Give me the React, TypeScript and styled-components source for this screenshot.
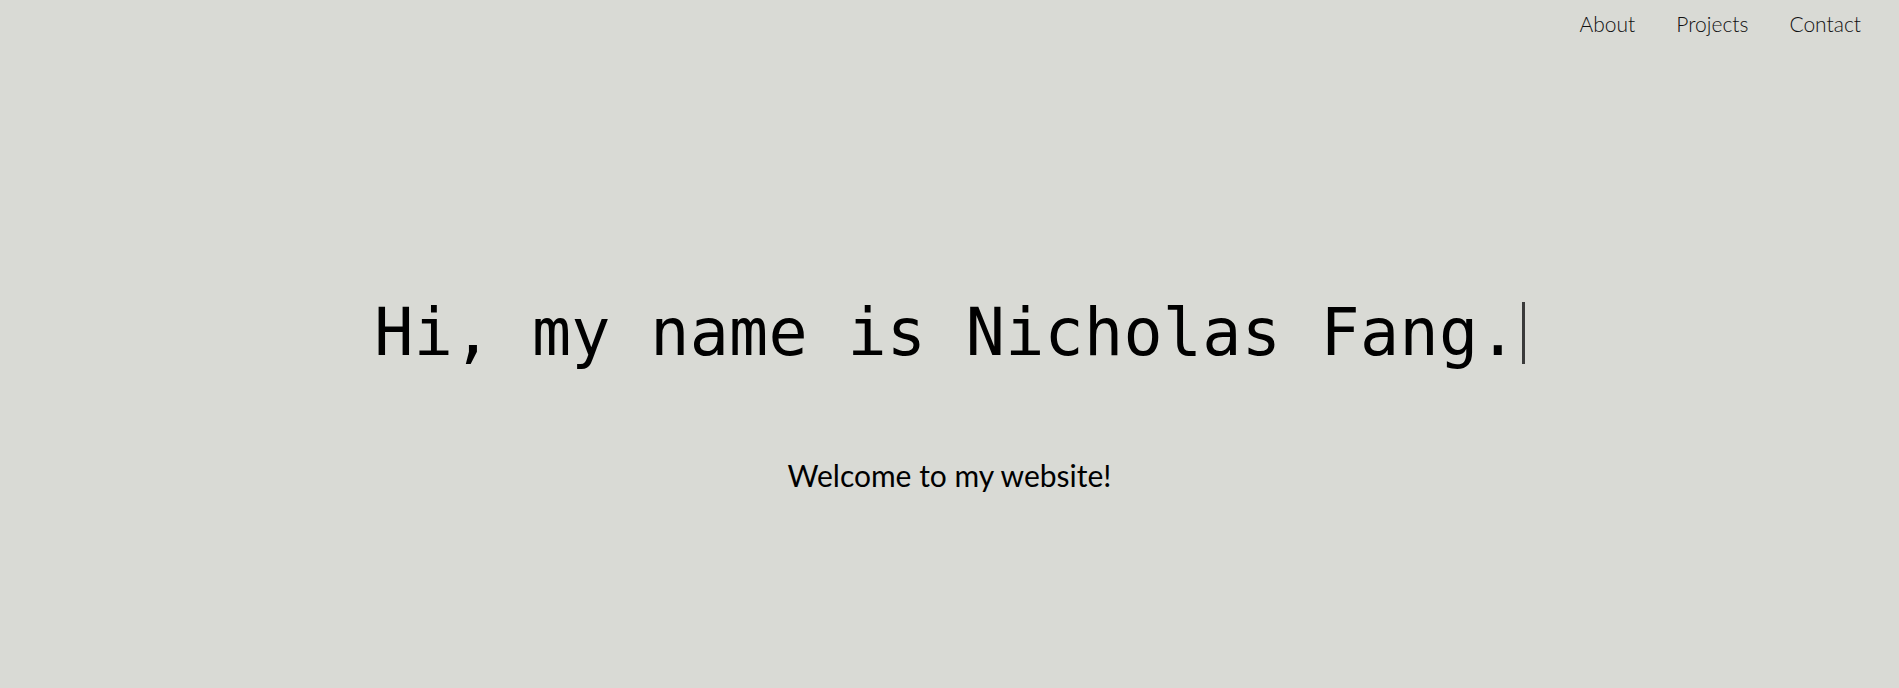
import React from "react";
import styled, { createGlobalStyle } from "styled-components";

const Global = createGlobalStyle`
  html, body { margin: 0; padding: 0; background: #d9dad5; }
  body { font-family: Lato, "Noto Sans", sans-serif; color: #000; }
  * { box-sizing: border-box; }
`;

const Page = styled.div`
  height: 688px;
  display: flex;
  flex-direction: column;
  background: #d9dad5;
`;

const Nav = styled.nav`
  display: flex;
  justify-content: flex-end;
  gap: 41px;
  padding: 10px 38px 0 0;
  height: 48px;
`;

const NavLink = styled.a`
  font-family: Lato, sans-serif;
  font-weight: 300;
  font-size: 21px;
  color: #111;
  text-decoration: none;
  line-height: 28px;
`;

const Hero = styled.main`
  flex: 1;
  display: flex;
  flex-direction: column;
  align-items: center;
  padding-top: 250px;
`;

const Heading = styled.h1`
  margin: 0;
  font-family: "DejaVu Sans Mono", "Liberation Mono", monospace;
  font-weight: 400;
  font-size: 65px;
  line-height: 70px;
  display: flex;
  align-items: center;
  letter-spacing: 0.3px;
`;

const Cursor = styled.span`
  display: inline-block;
  width: 3px;
  height: 62px;
  margin-left: 4px;
  margin-top: 0;
  background: #3a3a3a;
`;

const Sub = styled.p`
  margin: 89px 0 0;
  font-family: Lato, sans-serif;
  font-size: 30px;
  font-weight: 400;
`;

export default function App() {
  return (
    <>
      <Global />
      <Page>
        <Nav>
          <NavLink href="#">About</NavLink>
          <NavLink href="#">Projects</NavLink>
          <NavLink href="#">Contact</NavLink>
        </Nav>
        <Hero>
          <Heading>
            Hi, my name is Nicholas Fang.
            <Cursor />
          </Heading>
          <Sub>Welcome to my website!</Sub>
        </Hero>
      </Page>
    </>
  );
}
